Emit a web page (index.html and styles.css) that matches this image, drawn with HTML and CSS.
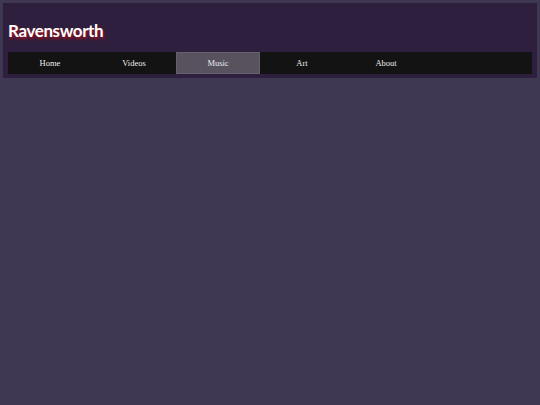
FILE: index.html
```html
<!DOCTYPE html>
<html>
<head>
<meta charset="utf-8">
<link rel="stylesheet" href="styles.css">
</head>
<body>
<header class="site-header">
  <h1 class="site-title">Ravensworth</h1>
  <nav class="main-nav">
    <a class="nav-item" href="#">Home</a>
    <a class="nav-item" href="#">Videos</a>
    <a class="nav-item active" href="#">Music</a>
    <a class="nav-item" href="#">Art</a>
    <a class="nav-item" href="#">About</a>
  </nav>
</header>
</body>
</html>
```

FILE: styles.css
```css
html, body {
  margin: 0;
  padding: 0;
}
body {
  background: #3e3852;
  min-height: 405px;
  padding: 3px;
  box-sizing: border-box;
}
.site-header {
  background: #2f1f3e;
  padding: 5px;
  height: 75px;
  box-sizing: border-box;
}
.site-title {
  margin: 0;
  height: 44px;
  display: flex;
  align-items: center;
  padding-top: 1px;
  box-sizing: border-box;
  font-family: "Comic Sans MS", "Lato", "DejaVu Sans", sans-serif;
  font-weight: 700;
  font-size: 17px;
  letter-spacing: -0.4px;
  color: #ffffff;
  text-shadow: 1px 2px 3px #b00d18;
}
.main-nav {
  display: flex;
  background: #131313;
  height: 22px;
}
.nav-item {
  width: 84px;
  display: flex;
  align-items: center;
  justify-content: center;
  font-family: "Liberation Serif", "Times New Roman", serif;
  font-size: 8.5px;
  color: #ececec;
  text-decoration: none;
  box-sizing: border-box;
}
.nav-item.active {
  background: #58525f;
  border: 1px solid #67616e;
}
```
